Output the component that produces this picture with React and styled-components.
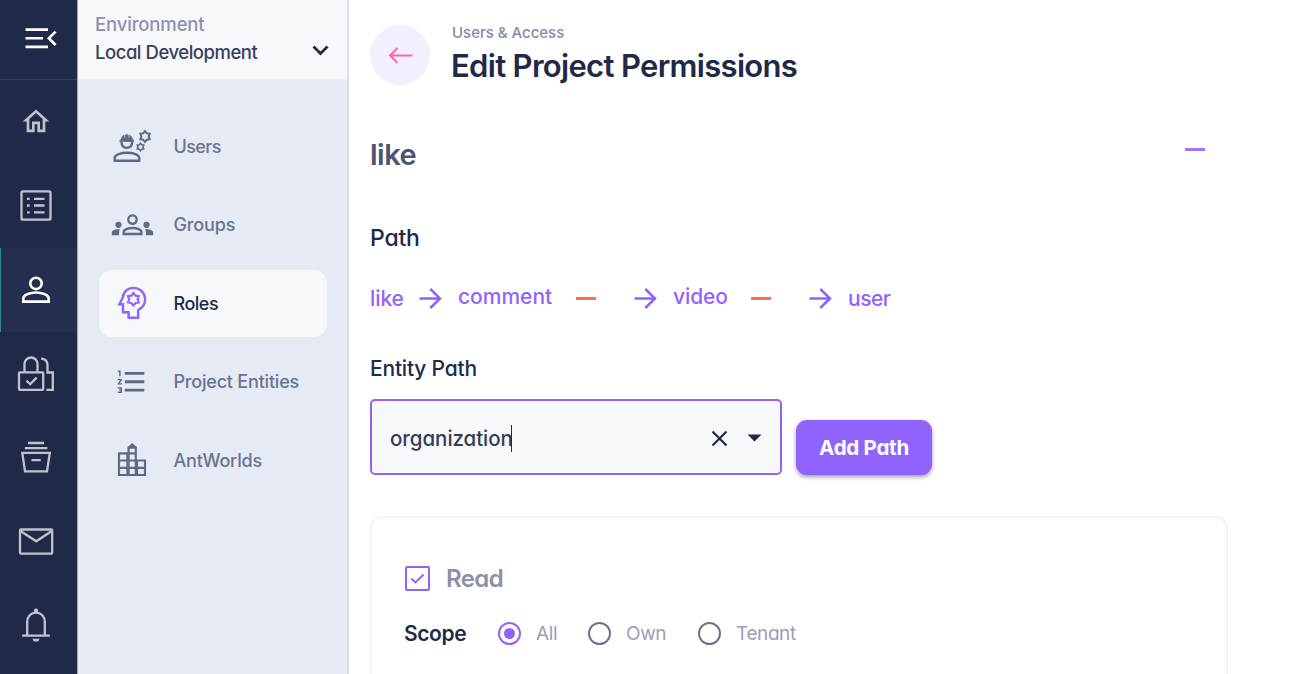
import React from "react";
import styled, { createGlobalStyle, css } from "styled-components";
import { MdOutlineHome, MdFormatListNumbered } from "react-icons/md";

const GlobalStyle = createGlobalStyle`
  * { box-sizing: border-box; }
  html, body { margin: 0; padding: 0; height: 674px; overflow: hidden; background: #fff; }
  body {
    font-family: "Inter", "Lato", "Liberation Sans", sans-serif;
    font-feature-settings: "cv11" 1;
    color: #202a48;
  }
  svg { display: block; flex: none; }
`;

const text = css`
  font-size: ${(p) => p.$size}px;
  font-weight: ${(p) => p.$weight || 500};
  letter-spacing: ${(p) => p.$track || 0}px;
  white-space: nowrap;
`;

const Page = styled.div`
  display: flex;
  width: 1314px;
  height: 674px;
  overflow: hidden;
`;

const Rail = styled.nav`
  flex: none;
  width: 78px;
  height: 674px;
  background: #202a48;
  border-right: 1px solid #a3a9bd;
  overflow: hidden;
`;

const RailToggle = styled.div`
  height: 80px;
  padding: 22px 0 0 24px;
  border-bottom: 1px solid #323b58;
`;

const RailItem = styled.div`
  height: 84px;
  display: flex;
  align-items: center;
  padding-left: ${(p) => (p.$active ? 15 : 16)}px;
  color: ${(p) => (p.$active ? "#ffffff" : "#c0c3cc")};
  background: ${(p) => (p.$active ? "#252e4c" : "transparent")};
  border-left: ${(p) => (p.$active ? "1px solid #2b8c88" : "none")};
`;

const Panel = styled.aside`
  flex: none;
  width: 271px;
  background: #e6eaf5;
  border-right: 2px solid #dadeea;
`;

const EnvSelect = styled.div`
  height: 80px;
  padding: 10px 18px 0 17px;
  display: flex;
  justify-content: space-between;
  background: #f7f8fc;
  border-bottom: 1px solid #eceff7;
`;

const EnvLabel = styled.div`
  ${text}
  line-height: 28px;
  color: #8d91ac;
`;

const EnvValue = styled.div`
  ${text}
  line-height: 28px;
  color: #38405c;
`;

const EnvChevron = styled.div`
  padding-top: 32px;
`;

const Menu = styled.div`
  padding: 32.5px 20px 0 20.5px;
  display: flex;
  flex-direction: column;
  gap: 11.5px;
`;

const MenuItem = styled.div`
  height: 67px;
  display: flex;
  align-items: center;
  gap: 20px;
  padding-left: 12px;
  border-radius: 13px;
  background: ${(p) => (p.$active ? "#f7f8fc" : "transparent")};
  color: ${(p) => (p.$active ? "#9063ff" : "#5f6884")};
`;

const MenuLabel = styled.span`
  ${text}
  color: ${(p) => (p.$active ? "#202a48" : "#6b738d")};
`;

const Main = styled.main`
  flex: 1;
  padding: 25px 0 0 21px;
`;

const Header = styled.header`
  display: flex;
  gap: 22px;
  height: 60px;
`;

const BackButton = styled.div`
  width: 60px;
  height: 60px;
  border-radius: 50%;
  background: #f4efff;
  display: flex;
  align-items: center;
  justify-content: center;
`;

const Eyebrow = styled.div`
  ${text}
  line-height: 16px;
  color: #858aa6;
`;

const Title = styled.h1`
  ${text}
  margin: 5px 0 0 -1px;
  line-height: 40px;
  color: #202a48;
`;

const SectionHead = styled.div`
  display: flex;
  justify-content: space-between;
  width: 835px;
  height: 36px;
  margin-top: 51px;
`;

const SectionTitle = styled.h2`
  ${text}
  margin: 0;
  line-height: 37px;
  color: #4c556f;
`;

const Dash = styled.span`
  flex: none;
  width: 20px;
  height: 3px;
  background: ${(p) => p.$color};
  margin-top: ${(p) => p.$top || 0}px;
`;

const SubTitle = styled.h3`
  ${text}
  margin: ${(p) => p.$top}px 0 0;
  line-height: 28px;
`;

const PathRow = styled.div`
  display: flex;
  height: 30px;
  margin-top: 31px;
`;

const Step = styled.span`
  ${text}
  display: block;
  width: ${(p) => p.$width}px;
  line-height: 28px;
  padding-top: ${(p) => (p.$removable ? 0 : 2)}px;
  color: #9063ff;
`;

const StepGap = styled.span`
  width: 38px;
`;

const StepArrow = styled.span`
  width: 39px;
  padding-top: 4px;
`;

const FormRow = styled.div`
  display: flex;
  align-items: flex-end;
  gap: 14px;
  height: 76px;
  margin-top: 16px;
`;

const Combo = styled.div`
  width: 412px;
  height: 76px;
  display: flex;
  align-items: center;
  padding: 2px 18px 0 18px;
  background: #f7f8fc;
  border: 2px solid #9063ff;
  border-radius: 5px;
`;

const ComboValue = styled.span`
  ${text}
  color: #343c58;
  width: 121px;
`;

const Caret = styled.span`
  width: 1px;
  height: 27px;
  background: #202a48;
`;

const ComboActions = styled.div`
  margin-left: auto;
  display: flex;
  align-items: center;
  gap: 19px;
`;

const AddButton = styled.button`
  ${text}
  width: 136px;
  height: 55px;
  padding: 0;
  border: 0;
  border-radius: 11px;
  background: #9063ff;
  color: #fff;
  font-family: inherit;
  font-feature-settings: inherit;
  box-shadow: 0 2px 4px rgba(32, 30, 60, 0.45);
`;

const Card = styled.section`
  width: 858px;
  height: 190px;
  margin-top: 41px;
  padding: 47px 32px 0 33px;
  border: 2px solid #f1f4fc;
  border-radius: 12px;
`;

const CheckRow = styled.div`
  display: flex;
  align-items: center;
  gap: 16px;
  height: 26px;
`;

const CheckLabel = styled.span`
  ${text}
  color: #8d90ab;
`;

const ScopeRow = styled.div`
  display: flex;
  align-items: center;
  height: 28px;
  margin-top: 28px;
`;

const ScopeTitle = styled.span`
  ${text}
  width: 94px;
  margin-left: -1px;
  color: #202a48;
`;

const Radio = styled.span`
  width: 23px;
  height: 23px;
  border-radius: 50%;
  border: 2.5px solid ${(p) => (p.$checked ? "#9063ff" : "#6b748a")};
  display: flex;
  align-items: center;
  justify-content: center;
  &::after {
    content: "";
    width: 11px;
    height: 11px;
    border-radius: 50%;
    background: ${(p) => (p.$checked ? "#9063ff" : "transparent")};
  }
`;

const RadioLabel = styled.span`
  ${text}
  width: ${(p) => p.$width}px;
  margin-left: 15px;
  color: #9a9eb7;
`;

const Line = ({ w, h, sw = 2, children, ...rest }) => (
  <svg width={w} height={h} viewBox={`0 0 ${w} ${h}`} fill="none" stroke="currentColor" strokeWidth={sw} {...rest}>
    {children}
  </svg>
);

const MenuFoldIcon = () => (
  <Line w={34} h={34} sw={2.6} stroke="#fff">
    <path d="M1.5 7.6H24M1.5 16.2H19M1.5 24.9H24M31.6 9.6L24.8 16.2L31.6 23" />
  </Line>
);

const HomeIcon = () => (
  <Line w={40} h={40} stroke="none">
    <MdOutlineHome size={32} x={4} y={3.5} />
  </Line>
);

const ListIcon = () => (
  <Line w={40} h={40} sw={2.3}>
    <rect x="5.5" y="5.3" width="29" height="28.4" rx="1.5" />
    <path d="M11 12.8h2.6M11 19.5h2.6M11 26.3h2.6M18 12.8h10.5M18 19.5h10.5M18 26.3h10.5" />
  </Line>
);

const PersonIcon = () => (
  <Line w={40} h={40} sw={2.6}>
    <circle cx="20" cy="13.4" r="5.7" />
    <path d="M7.3 31.6v-3.2C7.3 24.800 14 22.5 20 22.5s12.700 2.300 12.700 5.900v3.200z" />
  </Line>
);

const LocksIcon = () => (
  <Line w={40} h={40} sw={2.3}>
    <rect x="3" y="18.3" width="24.2" height="17.600" rx="0.8" />
    <path d="M8.5 18.300V10a6.500 6.500 0 0 1 13 0v8.300" />
    <path d="M10.500 26.600l3.700 3.600 6.400-6.600" />
    <path d="M25.200 4.300c3.500.6 6.300 3 6.300 6.600v7.600h5.300v17.400h-6.500" />
  </Line>
);

const ArchiveIcon = () => (
  <Line w={40} h={40} sw={2.300}>
    <path d="M12 5h16M8.800 10.200h22.600M6.300 14.900h27.500L31 33.300H9zM15.500 22.100h9.200" />
  </Line>
);

const MailIcon = () => (
  <Line w={40} h={40} sw={2.300}>
    <rect x="4" y="7.500" width="32.200" height="24.200" rx="1" />
    <path d="M4.500 9L20.200 19.300 35.800 9" />
  </Line>
);

const BellIcon = () => (
  <Line w={40} h={40} sw={2.300}>
    <path d="M6.200 29.700h27.600M11.200 29.500V15.700c0-5 3.700-9 8.800-9s8.800 4 8.800 9v13.800" />
    <circle cx="20" cy="4.800" r="2.200" fill="currentColor" stroke="none" />
    <path d="M16.600 32.700h6.800a3.400 2.900 0 0 1-6.800 0z" fill="currentColor" stroke="none" />
  </Line>
);

const gear = (cx, cy, r) => {
  const pts = [];
  for (let i = 0; i < 12; i++) {
    const a = (Math.PI / 6) * i - Math.PI / 2;
    const d = i % 2 ? r * 0.68 : r;
    pts.push(`${(cx + d * Math.cos(a)).toFixed(2)},${(cy + d * Math.sin(a)).toFixed(2)}`);
  }
  return pts.join(" ");
};

const WorkerIcon = () => (
  <Line w={42} h={42} sw={2.4}>
    <path d="M3.700 35.700v-2.600c0-3.600 6.200-5.400 12.300-5.400s12.200 1.800 12.200 5.400v2.600z" />
    <path d="M9.400 16.500C9.800 12 12 9.200 15.800 9.200s6 2.800 6.400 7.300z" fill="currentColor" stroke="none" />
    <path d="M8.600 15.800h14.400" strokeWidth="2" />
    <path d="M10.500 16.500c0 4 2 6.400 5.300 6.400s5.300-2.400 5.300-6.400" />
    <path d="M13.700 9.200v3.600M17.900 9.200v3.600" stroke="#e6eaf5" strokeWidth="0.7" />
    <polygon points={gear(34, 11.500, 5.400)} strokeWidth="2" />
    <polygon points={gear(29.500, 22, 3.700)} strokeWidth="1.700" />
  </Line>
);

const GroupIcon = () => (
  <Line w={43} h={42} sw={2.300}>
    <circle cx="21.500" cy="15.600" r="4.200" />
    <path d="M12.600 30v-1.700c0-2.700 4.600-4.300 8.900-4.300s8.900 1.600 8.900 4.300V30z" />
    <g fill="currentColor" stroke="none">
      <circle cx="7.500" cy="20.800" r="3.100" />
      <circle cx="35.500" cy="20.800" r="3.100" />
      <path d="M0.800 31.200v-2.400c0-2.600 3.700-4 8.300-3.400-.8.900-1 2-1 3.200v2.600zM42.200 31.200v-2.400c0-2.600-3.700-4-8.300-3.400.8.900 1 2 1 3.200v2.600z" />
    </g>
  </Line>
);

const MindIcon = () => (
  <Line w={42} h={42} sw={2.400}>
    <path d="M17.600 35.700V30.200H12V22.300H8.300L11.600 16C12.200 10 16.800 5.900 22.300 5.900c6.700 0 11.800 4.900 11.800 11.400 0 5-2.700 8.600-6.900 10.700v7.700z" />
    <polygon points={gear(22.400, 17.300, 6.200)} strokeWidth="2.200" />
  </Line>
);

const TowerIcon = () => (
  <Line w={42} h={42} sw={2.200}>
    <path d="M8 14.300h8.400V36H8zM8 21.500h8.400M8 28.800h8.400M17.600 8.600h7.200V36h-7.200zM17.600 14.300h7.200M17.600 21.500h7.200M17.600 28.800h7.200M26 21.500h8V36h-8zM26 28.800h8" />
    <path d="M17 8L21.200 4l4.200 4z" fill="currentColor" stroke="none" />
  </Line>
);

const IconSlot = styled.span`
  width: 43px;
  height: 42px;
  display: flex;
  align-items: center;
  justify-content: center;
`;

const StepArrowIcon = () => (
  <Line w={24} h={23} stroke="#9063ff" sw={2.500}>
    <path d="M0.500 11.500H21M11.300 2L21 11.500L11.300 21" />
  </Line>
);

const rail = [
  { id: "home", icon: <HomeIcon /> },
  { id: "list", icon: <ListIcon /> },
  { id: "users", icon: <PersonIcon />, active: true },
  { id: "locks", icon: <LocksIcon /> },
  { id: "archive", icon: <ArchiveIcon /> },
  { id: "mail", icon: <MailIcon /> },
  { id: "alerts", icon: <BellIcon /> },
];

const menu = [
  { label: "Users", icon: <WorkerIcon />, track: -0.6 },
  { label: "Groups", icon: <GroupIcon />, track: -0.15 },
  { label: "Roles", icon: <MindIcon />, track: -0.5, active: true },
  { label: "Project Entities", icon: <MdFormatListNumbered size={33.5} />, track: -0.2 },
  { label: "AntWorlds", icon: <TowerIcon />, track: -0.2 },
];

export default function App() {
  return (
    <>
      <GlobalStyle />
      <Page>
        <Rail>
          <RailToggle><MenuFoldIcon /></RailToggle>
          {rail.map((r) => (
            <RailItem key={r.id} $active={r.active}>{r.icon}</RailItem>
          ))}
        </Rail>
        <Panel>
          <EnvSelect>
            <div>
              <EnvLabel $size={18.5} $track={-0.15}>Environment</EnvLabel>
              <EnvValue $size={18.5} $track={-0.47} $weight={450}>Local Development</EnvValue>
            </div>
            <EnvChevron>
              <Line w={17} h={16} stroke="#202a48" sw={2.8}>
                <path d="M1.500 4.500L8.500 11.500L15.500 4.500" />
              </Line>
            </EnvChevron>
          </EnvSelect>
          <Menu>
            {menu.map((m) => (
              <MenuItem key={m.label} $active={m.active}>
                <IconSlot>{m.icon}</IconSlot>
                <MenuLabel $size={18} $track={m.track} $active={m.active}>{m.label}</MenuLabel>
              </MenuItem>
            ))}
          </Menu>
        </Panel>
        <Main>
          <Header>
            <BackButton>
              <Line w={25} h={18} stroke="#ff63ae" sw={2}>
                <path d="M24.500 9.500H2M9.500 2L2 9.500L9.500 17" />
              </Line>
            </BackButton>
            <div>
              <Eyebrow $size={15} $track={-0.02}>Users &amp; Access</Eyebrow>
              <Title $size={31} $weight={600} $track={-0.68}>Edit Project Permissions</Title>
            </div>
          </Header>
          <SectionHead>
            <SectionTitle $size={29} $weight={600} $track={-0.5}>like</SectionTitle>
            <Dash $color="#9c75ff" $top={12} />
          </SectionHead>
          <SubTitle $top={52} $size={23} $track={-0.2}>Path</SubTitle>
          <PathRow>
            <Step $size={21} $track={-0.1} $width={49}>like</Step>
            <StepArrow><StepArrowIcon /></StepArrow>
            <Step $size={21} $track={0} $width={118} $removable>comment</Step>
            <Dash $color="#ff6c5c" $top={14} />
            <StepGap />
            <StepArrow><StepArrowIcon /></StepArrow>
            <Step $size={21} $track={-0.1} $width={78} $removable>video</Step>
            <Dash $color="#ff6c5c" $top={14} />
            <StepGap />
            <StepArrow><StepArrowIcon /></StepArrow>
            <Step $size={21} $track={-0.5} $width={60}>user</Step>
          </PathRow>
          <SubTitle $top={42} $size={21} $track={-0.2}>Entity Path</SubTitle>
          <FormRow>
            <Combo>
              <ComboValue $size={20.5} $track={-0.05} $weight={450}>organization</ComboValue>
              <Caret />
              <ComboActions>
                <Line w={17} h={17} stroke="#202a48" sw={2.200}>
                  <path d="M1.500 1.500L15.500 15.500M15.500 1.500L1.500 15.500" />
                </Line>
                <Line w={15} h={8} stroke="none">
                  <path d="M0.500 0.500H14.500L7.500 7.500z" fill="#202a48" />
                </Line>
              </ComboActions>
            </Combo>
            <AddButton $size={20.5} $weight={700} $track={-0.25}>Add Path</AddButton>
          </FormRow>
          <Card>
            <CheckRow>
              <Line w={25} h={25} stroke="#9063ff">
                <rect x="1" y="1" width="23" height="23" rx="1" />
                <path d="M6.300 12.500l4.200 4 8-8" strokeWidth="1.900" />
              </Line>
              <CheckLabel $size={24} $weight={600} $track={-0.6}>Read</CheckLabel>
            </CheckRow>
            <ScopeRow>
              <ScopeTitle $size={21} $weight={600} $track={-0.4}>Scope</ScopeTitle>
              <Radio $checked />
              <RadioLabel $size={19} $weight={400} $track={-0.4} $width={52}>All</RadioLabel>
              <Radio />
              <RadioLabel $size={19} $weight={400} $track={-0.4} $width={72}>Own</RadioLabel>
              <Radio />
              <RadioLabel $size={19} $weight={400} $track={-0.4} $width={80}>Tenant</RadioLabel>
            </ScopeRow>
          </Card>
        </Main>
      </Page>
    </>
  );
}
